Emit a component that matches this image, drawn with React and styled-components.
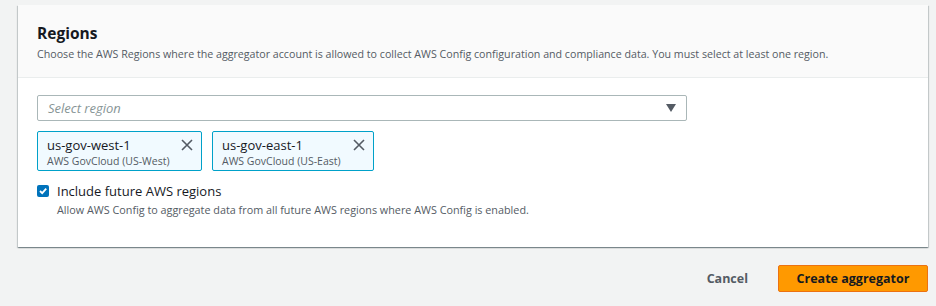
import styled, { createGlobalStyle } from "styled-components";

const Global = createGlobalStyle`
  body {
    margin: 0;
    background: #f2f3f3;
    font-family: "Open Sans", "Liberation Sans", sans-serif;
    color: #16191f;
  }
`;

const Page = styled.div`
  width: 936px;
  height: 306px;
  padding: 5px 8px 0 18px;
  box-sizing: border-box;
`;

const Card = styled.section`
  width: 910px;
  background: #fff;
  box-shadow: 0 1px 1px 0 rgba(0, 28, 36, 0.3), 1px 1px 1px 0 rgba(0, 28, 36, 0.15),
    -1px 1px 1px 0 rgba(0, 28, 36, 0.15);
`;

const CardHeader = styled.header`
  background: #fafafa;
  border-bottom: 1px solid #eaeded;
  padding: 17px 19px 15px;
  height: 73px;
  box-sizing: border-box;
`;

const Title = styled.h2`
  margin: 0;
  font-size: 15.5px;
  line-height: 22px;
  font-weight: 700;
`;

const Description = styled.p`
  margin: 2px 0 0;
  font-size: 10.66px;
  line-height: 16px;
  color: #545b64;
`;

const CardBody = styled.div`
  padding: 17px 19px 29px;
`;

const Select = styled.div`
  width: 650px;
  height: 26px;
  box-sizing: border-box;
  border: 1px solid #aab7b8;
  border-radius: 2px;
  display: flex;
  align-items: center;
  justify-content: space-between;
  padding: 0 10px;
`;

const Placeholder = styled.span`
  font-size: 13px;
  font-style: italic;
  color: #879596;
`;

const Tokens = styled.div`
  display: flex;
  gap: 10px;
  margin-top: 10px;
`;

const Token = styled.div`
  display: flex;
  justify-content: space-between;
  align-items: flex-start;
  width: ${({ $w }) => $w}px;
  height: 40px;
  box-sizing: border-box;
  background: #f1faff;
  border: 1px solid #00a1c9;
  border-radius: 2px;
  padding: 4px 8px 0 9px;
`;

const TokenName = styled.div`
  font-size: 13px;
  line-height: 18px;
`;

const TokenSub = styled.div`
  font-size: 10.5px;
  line-height: 14px;
  color: #545b64;
`;

const Dismiss = styled.svg`
  margin-top: 3px;
  flex-shrink: 0;
`;

const CheckRow = styled.div`
  display: flex;
  align-items: flex-start;
  gap: 8px;
  margin-top: 11px;
`;

const Box = styled.span`
  width: 12px;
  height: 12px;
  margin-top: 3px;
  background: #0073bb;
  border-radius: 2px;
  display: flex;
  align-items: center;
  justify-content: center;
`;

const Label = styled.div`
  font-size: 13px;
  line-height: 18px;
`;

const Hint = styled.div`
  font-size: 10.8px;
  line-height: 16px;
  color: #545b64;
  margin-top: 2px;
`;

const Actions = styled.div`
  display: flex;
  justify-content: flex-end;
  align-items: center;
  gap: 30px;
  margin-top: 18px;
`;

const LinkButton = styled.button`
  border: none;
  background: none;
  font-family: inherit;
  font-size: 12.5px;
  font-weight: 700;
  color: #545b64;
  padding: 0;
`;

const PrimaryButton = styled.button`
  width: 150px;
  height: 27px;
  border: 1px solid #ec7211;
  border-radius: 2px;
  background: #ff9900;
  font-family: inherit;
  font-size: 12.5px;
  font-weight: 700;
  color: #16191f;
`;

const regions = [
  { id: "us-gov-west-1", name: "AWS GovCloud (US-West)", w: 165 },
  { id: "us-gov-east-1", name: "AWS GovCloud (US-East)", w: 162 },
];

export default function App() {
  return (
    <Page>
      <Global />
      <Card>
        <CardHeader>
          <Title>Regions</Title>
          <Description>
            Choose the AWS Regions where the aggregator account is allowed to collect AWS Config
            configuration and compliance data. You must select at least one region.
          </Description>
        </CardHeader>
        <CardBody>
          <Select>
            <Placeholder>Select region</Placeholder>
            <svg width="10" height="8" viewBox="0 0 10 8">
              <path d="M0 0h10L5 8z" fill="#545b64" />
            </svg>
          </Select>
          <Tokens>
            {regions.map((r) => (
              <Token key={r.id} $w={r.w}>
                <div>
                  <TokenName>{r.id}</TokenName>
                  <TokenSub>{r.name}</TokenSub>
                </div>
                <Dismiss width="12" height="12" viewBox="0 0 12 12">
                  <path d="M1 1l10 10M11 1L1 11" stroke="#545b64" strokeWidth="1.6" />
                </Dismiss>
              </Token>
            ))}
          </Tokens>
          <CheckRow>
            <Box>
              <svg width="10" height="10" viewBox="0 0 10 10">
                <path d="M2 5l2.2 2.2L8.2 2.6" stroke="#fff" strokeWidth="1.8" fill="none" />
              </svg>
            </Box>
            <div>
              <Label>Include future AWS regions</Label>
              <Hint>Allow AWS Config to aggregate data from all future AWS regions where AWS Config is enabled.</Hint>
            </div>
          </CheckRow>
        </CardBody>
      </Card>
      <Actions>
        <LinkButton>Cancel</LinkButton>
        <PrimaryButton>Create aggregator</PrimaryButton>
      </Actions>
    </Page>
  );
}
